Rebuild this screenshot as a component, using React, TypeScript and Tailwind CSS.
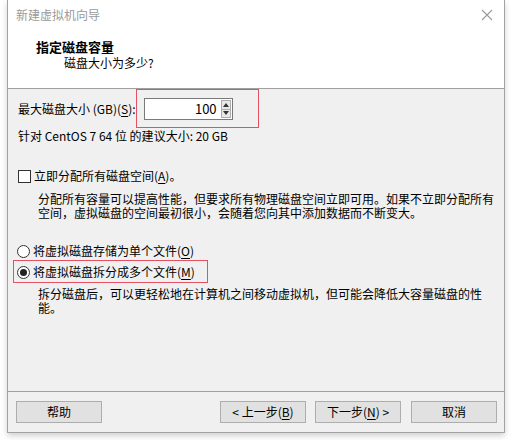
import React from "react";

const font = { fontFamily: '"Noto Sans CJK SC", "Noto Sans", sans-serif' };

function Key({ k }: { k: string }) {
  return <span className="underline underline-offset-2">{k}</span>;
}

function Button({ children }: { children: React.ReactNode }) {
  return (
    <div className="w-[86px] h-[22px] flex items-center justify-center bg-[#e1e1e1] border border-[#adadad] text-[12px] text-black">
      {children}
    </div>
  );
}

function Radio({ checked }: { checked?: boolean }) {
  return (
    <span className="w-[13px] h-[13px] rounded-full border border-[#333] bg-white flex items-center justify-center shrink-0">
      {checked && <span className="w-[7px] h-[7px] rounded-full bg-[#222]" />}
    </span>
  );
}

export default function App() {
  return (
    <div className="w-[513px] h-[440px] bg-white pl-[7px] overflow-hidden" style={font}>
      <div className="relative w-[498px] h-[433px] flex flex-col border-l border-r border-b border-[#a3a3a3] shadow-[0_3px_6px_rgba(0,0,0,0.18)] bg-[#f0f0f0] text-[12px] text-black">
        {/* header */}
        <div className="h-[89px] bg-white border-b border-[#a0a0a0] flex flex-col">
          <div className="h-[30px] flex items-center justify-between pl-[8px] pr-[9px]">
            <span className="text-[#9a9a9a] text-[12px]">新建虚拟机向导</span>
            <svg width="12" height="12" viewBox="0 0 12 12" className="mr-[2px]">
              <path d="M1 1 L11 11 M11 1 L1 11" stroke="#9a9a9a" strokeWidth="1.1" />
            </svg>
          </div>
          <div className="pl-[28px] mt-[8px] h-[17px] flex items-center font-bold text-[13px]">指定磁盘容量</div>
          <div className="pl-[56px] h-[15px] flex items-center">磁盘大小为多少?</div>
        </div>

        {/* body */}
        <div className="flex-1 flex flex-col pl-[10px] whitespace-nowrap">
          <div className="mt-[9px] h-[22px] flex items-center">
            <span>
              最大磁盘大小 (GB)(<Key k="S" />):
            </span>
            <div className="relative ml-[8px] w-[89px] h-[22px] flex bg-white border border-[#7a7a7a]">
              <div className="flex-1 flex items-center justify-end pr-[4px] text-[13px]">100</div>
              <div className="w-[10px] my-[1px] mr-[1px] flex flex-col border border-[#adadad] bg-[#e8e8e8]">
                <div className="flex-1 flex items-center justify-center border-b border-[#adadad]">
                  <svg width="6" height="4" viewBox="0 0 6 4">
                    <path d="M0 4 L3 0 L6 4 Z" fill="#333" />
                  </svg>
                </div>
                <div className="flex-1 flex items-center justify-center">
                  <svg width="6" height="4" viewBox="0 0 6 4">
                    <path d="M0 0 L3 4 L6 0 Z" fill="#333" />
                  </svg>
                </div>
              </div>
              {/* annotation rectangle */}
              <div className="absolute -left-[9px] -top-[10px] w-[123px] h-[39px] border border-[#e65161]" />
            </div>
          </div>
          <div className="mt-[8px] h-[16px] flex items-center">针对 CentOS 7 64 位 的建议大小: 20 GB</div>

          <div className="mt-[24px] h-[16px] flex items-center gap-[3px]">
            <span className="w-[13px] h-[13px] border border-[#333] bg-white shrink-0" />
            <span>
              立即分配所有磁盘空间(<Key k="A" />)。
            </span>
          </div>
          <div className="mt-[8px] pl-[20px] leading-[14px]">
            <div>分配所有容量可以提高性能，但要求所有物理磁盘空间立即可用。如果不立即分配所有</div>
            <div>空间，虚拟磁盘的空间最初很小，会随着您向其中添加数据而不断变大。</div>
          </div>

          <div className="mt-[23px] h-[16px] flex items-center gap-[3px] -ml-[1px]">
            <Radio />
            <span>
              将虚拟磁盘存储为单个文件(<Key k="O" />)
            </span>
          </div>
          <div className="relative mt-[5px] h-[16px] flex items-center gap-[3px] -ml-[1px]">
            <Radio checked />
            <span>
              将虚拟磁盘拆分成多个文件(<Key k="M" />)
            </span>
            {/* annotation rectangle */}
            <div className="absolute -left-[4px] -top-[4px] w-[195px] h-[23px] border border-[#e65161]" />
          </div>
          <div className="mt-[7px] pl-[20px] leading-[14px]">
            <div>拆分磁盘后，可以更轻松地在计算机之间移动虚拟机，但可能会降低大容量磁盘的性</div>
            <div>能。</div>
          </div>
        </div>

        {/* footer */}
        <div className="h-[41px] border-t border-[#a0a0a0] flex items-start pt-[9px] pl-[8px] pr-[7px]">
          <Button>帮助</Button>
          <div className="flex-1" />
          <div className="flex gap-[9px]">
            <Button>
              &lt; 上一步(<Key k="B" />)
            </Button>
            <Button>
              下一步(<Key k="N" />) &gt;
            </Button>
            <div className="ml-[1px]">
              <Button>取消</Button>
            </div>
          </div>
        </div>
      </div>
    </div>
  );
}
